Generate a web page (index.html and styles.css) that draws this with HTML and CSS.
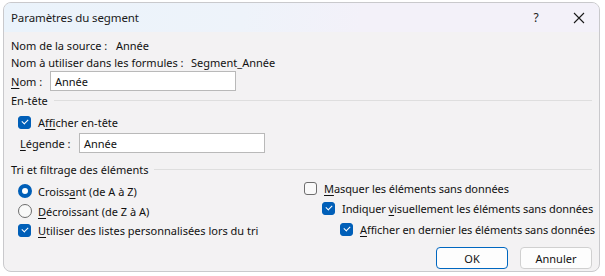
FILE: index.html
```html
<!DOCTYPE html>
<html lang="fr">
<head>
<meta charset="utf-8">
<title>Paramètres du segment</title>
<link rel="stylesheet" href="styles.css">
</head>
<body>
<div class="dialog">
  <div class="titlebar">
    <span class="title">Paramètres du segment</span>
    <span class="tbtn help">?</span>
    <span class="tbtn close"><svg width="12" height="12" viewBox="0 0 12 12"><path d="M1 1L11 11M11 1L1 11" stroke="#1a1a1a" stroke-width="1.1" fill="none"/></svg></span>
  </div>
  <div class="content">
    <div class="row info"><span class="lbl1">Nom de la source :</span><span>Année</span></div>
    <div class="row info"><span class="lbl2">Nom à utiliser dans les formules :</span><span>Segment_Année</span></div>
    <div class="row field"><span class="lbl3"><u>N</u>om :</span><div class="input w1">Année</div></div>
    <div class="group"><span>En-tête</span><span class="rule"></span></div>
    <div class="row chk indent1"><span class="box checked"></span><span>A<u>f</u>ficher en-tête</span></div>
    <div class="row field indent2"><span class="lbl4"><u>L</u>égende :</span><div class="input w1">Année</div></div>
    <div class="group g2"><span>Tri et filtrage des éléments</span><span class="rule"></span></div>
    <div class="cols">
      <div class="left">
        <div class="row opt"><span class="radio checked"></span><span>Croiss<u>a</u>nt (de A à Z)</span></div>
        <div class="row opt"><span class="radio"></span><span><u>D</u>écroissant (de Z à A)</span></div>
        <div class="row opt"><span class="box checked"></span><span><u>U</u>tiliser des listes personnalisées lors du tri</span></div>
      </div>
      <div class="right">
        <div class="row opt"><span class="box"></span><span><u>M</u>asquer les éléments sans données</span></div>
        <div class="row opt sub1"><span class="box checked"></span><span>Indiquer <u>v</u>isuellement les éléments sans données</span></div>
        <div class="row opt sub2"><span class="box checked"></span><span><u>A</u>fficher en dernier les éléments sans données</span></div>
      </div>
    </div>
    <div class="buttons">
      <button class="btn default">OK</button>
      <button class="btn">Annuler</button>
    </div>
  </div>
</div>
</body>
</html>
```
FILE: styles.css
```css
html, body {
  margin: 0;
  padding: 0;
  background: #ffffff;
}
body {
  width: 605px;
  height: 276px;
  overflow: hidden;
  font-family: "Noto Sans", "DejaVu Sans", sans-serif;
  font-size: 11px;
  color: #111111;
  white-space: nowrap;
}
.dialog {
  margin: 2px 0 0 3px;
  width: 597px;
  height: 270px;
  box-sizing: border-box;
  border: 1px solid #c9c9cc;
  border-radius: 8px;
  background: #f3f2f3;
  overflow: hidden;
  display: flex;
  flex-direction: column;
}
.titlebar {
  height: 29px;
  flex: none;
  display: flex;
  align-items: center;
  background: linear-gradient(100deg, #eaf3fb 0%, #eef3fa 40%, #f3f1f9 60%, #f3f1f9 100%);
  padding-left: 7px;
}
.title {
  flex: 1;
  color: #1a1a1a;
  font-size: 11.5px;
  letter-spacing: -0.1px;
}
.tbtn {
  display: flex;
  justify-content: center;
  align-items: center;
}
.help {
  width: 46px;
  margin-right: 4px;
  font-size: 12px;
  color: #1a1a1a;
}
.close {
  width: 32px;
  padding-right: 4px;
}
.content {
  padding: 5px 7px 0 7px;
  display: flex;
  flex-direction: column;
}
.row {
  display: flex;
  align-items: center;
}
.row > span { flex: none; }
.info {
  height: 17px;
}
.lbl1 { width: 105px; }
.lbl2 { width: 180px; }
.lbl3 { width: 39px; }
.lbl4 { width: 59px; }
.field {
  height: 20px;
}
.input {
  box-sizing: border-box;
  height: 20px;
  background: #ffffff;
  border: 1px solid #b9b9b9;
  padding: 0 4px;
  display: flex;
  align-items: center;
  flex: none;
}
.w1 { width: 186px; }
.group {
  display: flex;
  align-items: center;
  height: 16px;
  margin-top: 1px;
}
.group .rule {
  flex: 1;
  height: 1px;
  background: #dedede;
  margin-left: 6px;
}
.g2 { margin-top: 8px; }
.chk {
  height: 16px;
  margin-top: 6px;
}
.indent1 { padding-left: 7px; }
.indent2 { padding-left: 9px; margin-top: 3px; }
.box {
  width: 13px;
  height: 13px;
  box-sizing: border-box;
  border: 1px solid #6e6e6e;
  border-radius: 3px;
  background: #f9f9f9;
  margin-right: 7px;
  position: relative;
}
.box.checked {
  background: #005fb8;
  border-color: #005fb8;
}
.box.checked::after {
  content: "";
  position: absolute;
  left: 3px;
  top: 2px;
  width: 5px;
  height: 3px;
  border-left: 1px solid #ffffff;
  border-bottom: 1px solid #ffffff;
  transform: rotate(-45deg);
}
.radio {
  width: 14px;
  height: 14px;
  box-sizing: border-box;
  border: 1px solid #6e6e6e;
  border-radius: 50%;
  background: #f9f9f9;
  margin-right: 6px;
}
.radio.checked {
  border: 4px solid #005fb8;
  background: #ffffff;
}
.cols {
  display: flex;
  margin-top: 2px;
}
.left {
  width: 293px;
  box-sizing: border-box;
  padding-left: 7px;
  padding-top: 2px;
  flex: none;
}
.right {
  margin-top: -1px;
  letter-spacing: -0.08px;
}
.left .opt { height: 20px; }
.left .opt:last-child { height: 18px; }
.right .opt { height: 20px; }
.sub1 { padding-left: 18px; }
.sub2 { padding-left: 36px; margin-top: 1px; }
.buttons {
  display: flex;
  justify-content: flex-end;
  gap: 12px;
  margin-top: 8px;
}
.btn {
  width: 72px;
  height: 22px;
  box-sizing: border-box;
  background: #fdfdfd;
  border: 1px solid #d0d0d0;
  border-radius: 4px;
  font-family: "Noto Sans", "DejaVu Sans", sans-serif;
  font-size: 11px;
  color: #111111;
  padding: 0;
}
.btn.default {
  border-color: #0067c0;
}
u {
  text-decoration-thickness: 1px;
  text-underline-offset: 2px;
}
```
